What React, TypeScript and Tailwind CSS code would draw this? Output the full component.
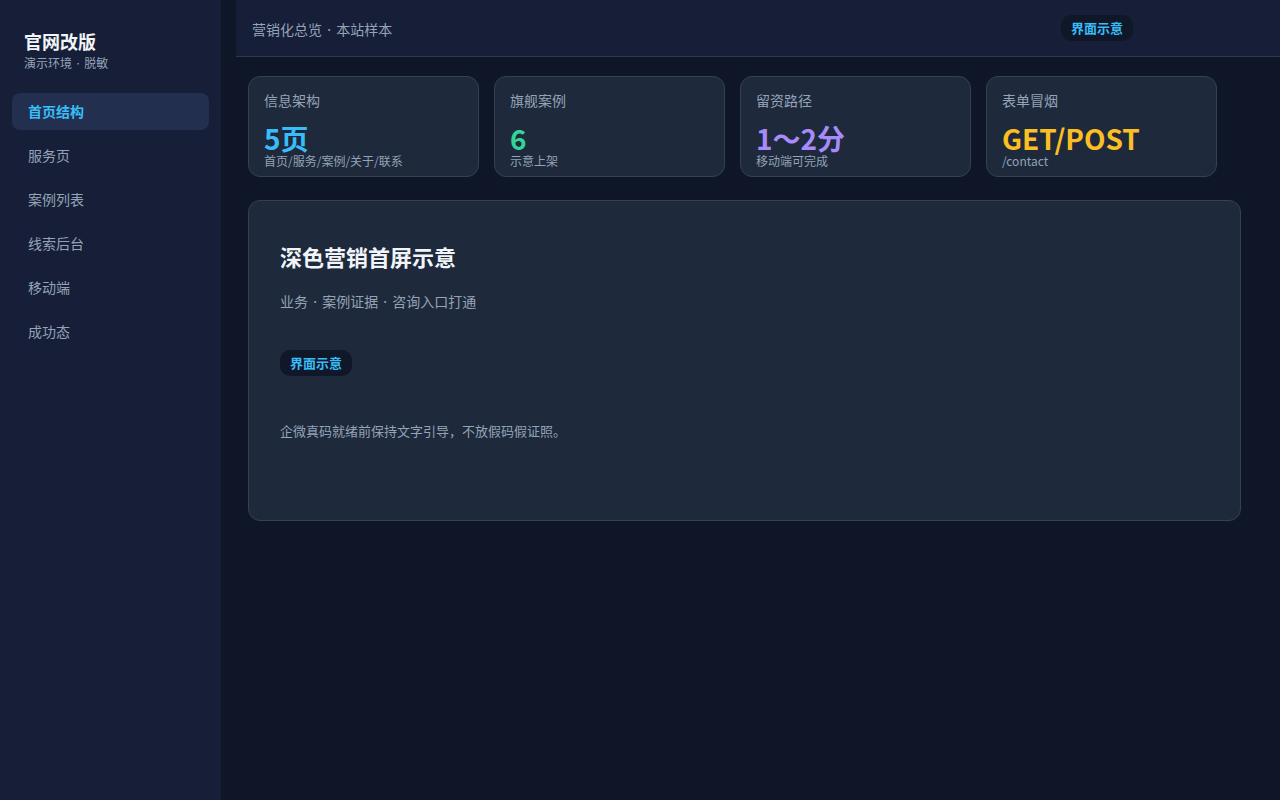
import React from "react";

const navItems = ["首页结构", "服务页", "案例列表", "线索后台", "移动端", "成功态"];

const stats = [
    { label: "信息架构", value: "5页", note: "首页/服务/案例/关于/联系", color: "text-[#38bdf8]" },
    { label: "旗舰案例", value: "6", note: "示意上架", color: "text-[#34d399]" },
    { label: "留资路径", value: "1～2分", note: "移动端可完成", color: "text-[#a78bfa]" },
    { label: "表单冒烟", value: "GET/POST", note: "/contact", color: "text-[#fbbf24]" },
];

// narrow interpunct, as in the reference
const Dot: React.FC = () => (
    <span style={{ fontFamily: '"Noto Sans CJK JP", sans-serif' }}> · </span>
);

const Badge: React.FC = () => (
    <span className="inline-flex h-[26px] items-center rounded-[10px] bg-[#0f1729] px-[10px] text-[13px] font-bold text-[#38bdf8]">
        界面示意
    </span>
);

export default function App() {
    return (
        <div
            className="flex min-h-[800px] w-full bg-[#0e1628]"
            style={{ fontFamily: '"Noto Sans CJK SC", "Noto Sans", sans-serif' }}
        >
            {/* Sidebar */}
            <aside className="w-[221px] shrink-0 bg-[#161f37] px-3 pt-[29px]">
                <div className="px-3">
                    <div className="text-[18px] font-bold leading-6 text-[#f1f5f9]">官网改版</div>
                    <div className="mt-[2px] text-[12px] leading-4 text-[#94a3b8]">
                        演示环境<Dot />脱敏
                    </div>
                </div>
                <nav className="mt-[22px] flex flex-col gap-[7px]">
                    {navItems.map((item, i) => (
                        <div
                            key={item}
                            className={
                                i === 0
                                    ? "flex h-[37px] items-center rounded-lg bg-[#232f4e] px-4 text-[14px] font-bold text-[#38bdf8]"
                                    : "flex h-[37px] items-center rounded-lg px-4 text-[14px] text-[#94a3b8]"
                            }
                        >
                            {item}
                        </div>
                    ))}
                </nav>
            </aside>

            {/* Main */}
            <main className="flex-1 pl-[15px]">
                <header className="flex h-[57px] items-center justify-between border-b border-[#2c3852] bg-[#161f37] pl-4 pr-[147px]">
                    <span className="pt-[2px] text-[14px] text-[#94a3b8]">
                        营销化总览<Dot />本站样本
                    </span>
                    <Badge />
                </header>

                <div className="pl-3 pr-[39px] pt-[19px]">
                    <div className="flex gap-[15px]">
                        {stats.map((s) => (
                            <div
                                key={s.label}
                                className="h-[101px] w-[231px] rounded-xl border border-[#334155] bg-[#1e293b] px-[15px] pt-[13px]"
                            >
                                <div className="text-[14px] leading-5 text-[#94a3b8]">{s.label}</div>
                                <div className={`mt-[14px] text-[28px] font-bold leading-[28px] ${s.color}`}>
                                    {s.value}
                                </div>
                                <div className="mt-[1px] text-[12px] leading-4 text-[#94a3b8]">{s.note}</div>
                            </div>
                        ))}
                    </div>

                    <section className="mt-[23px] h-[321px] rounded-xl border border-[#334155] bg-[#1e293b] px-[31px] pt-[41px]">
                        <h2 className="text-[22px] font-bold leading-7 text-[#f1f5f9]">深色营销首屏示意</h2>
                        <p className="mt-[21px] text-[14px] leading-5 text-[#94a3b8]">
                            业务<Dot />案例证据<Dot />咨询入口打通
                        </p>
                        <div className="mt-[38px]">
                            <Badge />
                        </div>
                        <p className="mt-[45px] text-[13px] leading-5 text-[#94a3b8]">
                            企微真码就绪前保持文字引导，不放假码假证照。
                        </p>
                    </section>
                </div>
            </main>
        </div>
    );
}
